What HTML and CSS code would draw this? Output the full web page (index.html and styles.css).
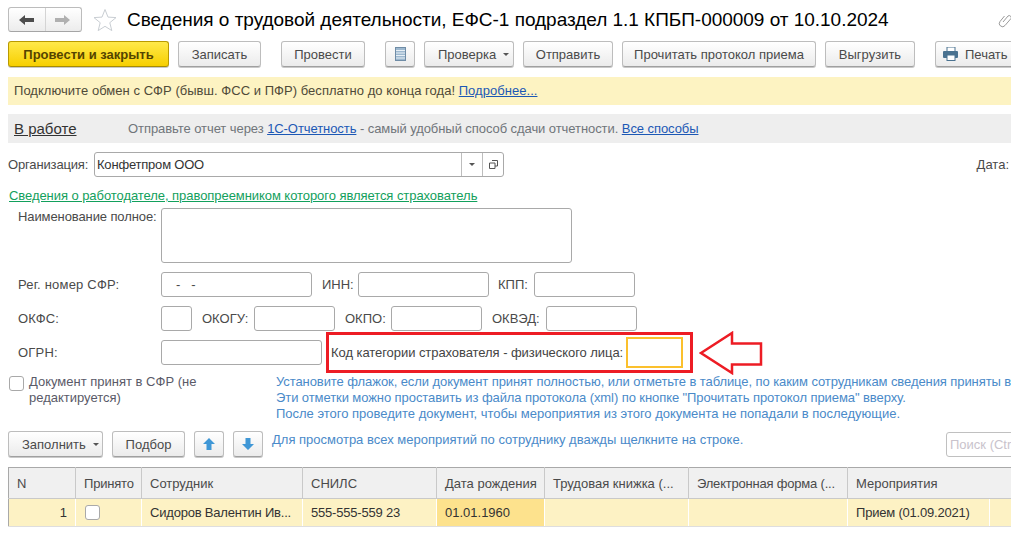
FILE: index.html
```html
<!DOCTYPE html>
<html lang="ru">
<head>
<meta charset="utf-8">
<title>Сведения о трудовой деятельности</title>
<link rel="stylesheet" href="styles.css">
</head>
<body>
<div class="page">
  <header class="head">
    <div class="nav">
      <span class="nav-btn"><svg width="16" height="12" viewBox="0 0 16 12"><path d="M0 6l6-5v3h9v4H6v3z" fill="#4d4d4d"/></svg></span>
      <span class="nav-btn"><svg width="16" height="12" viewBox="0 0 16 12"><path d="M15 6L9 1v3H0v4h9v3z" fill="#b0b0b0"/></svg></span>
    </div>
    <svg class="star" width="24" height="24" viewBox="0 0 24 24"><path d="M12 1.5l3 7.6 8 .5-6.200 5.100 2 7.900L12 18.300 5.200 22.600l2-7.900L1 9.600l8-.5z" fill="#fff" stroke="#c9ced3"/></svg>
    <h1 class="title">Сведения о трудовой деятельности, ЕФС-1 подраздел 1.1 КПБП-000009 от 10.10.2024</h1>
    <svg class="clip" width="16" height="16" viewBox="0 0 16 16"><path d="M6 10l5-6a2 2 0 0 1 3 2.500L8 13.500a3.200 3.200 0 0 1-5-4L7.500 4" fill="none" stroke="#9a9a9a"/></svg>
  </header>

  <nav class="toolbar">
    <button class="btn primary w161">Провести и закрыть</button>
    <button class="btn w83">Записать</button>
    <button class="btn w84 gap-l">Провести</button>
    <button class="btn w30 gap-l" aria-label="Структура"><svg width="11" height="14" viewBox="0 0 11 14"><rect x=".5" y=".5" width="10" height="13" fill="#9db8cf" stroke="#6f8ca6"/><path d="M1 3.500h9M1 6h9M1 8.500h9M1 11h9" stroke="#e8f0f6"/></svg></button>
    <button class="btn w90 has-caret">Проверка<i class="caret"></i></button>
    <button class="btn w90">Отправить</button>
    <button class="btn w194">Прочитать протокол приема</button>
    <button class="btn w90">Выгрузить</button>
    <button class="btn w90 gap-l print"><svg width="16" height="14" viewBox="0 0 16 14"><rect x="4" y="0" width="8" height="5" fill="#fff" stroke="#4a7290"/><rect x="0" y="4" width="15" height="7" rx="1" fill="#4a7290"/><rect x="4" y="8" width="8" height="5.500" fill="#fff" stroke="#4a7290"/></svg>Печать</button>
  </nav>

  <div class="banner">Подключите обмен с СФР (бывш. ФСС и ПФР) бесплатно до конца года! <a href="#">Подробнее...</a></div>

  <div class="status">
    <a class="state" href="#">В работе</a>
    <span class="status-text">Отправьте отчет через <a href="#">1С-Отчетность</a> - самый удобный способ сдачи отчетности. <a href="#">Все способы</a></span>
  </div>

  <div class="org">
    <label class="org-label">Организация:</label>
    <div class="org-field">
      <span class="org-value">Конфетпром ООО</span>
      <span class="org-btn"><i class="caret"></i></span>
      <span class="org-btn"><svg width="9" height="9" viewBox="0 0 9 9"><path d="M3 .5h5.500V6H6M.5 3H6v5.500H.5z" fill="none" stroke="#555"/></svg></span>
    </div>
    <label class="date-label">Дата:</label>
  </div>

  <a class="green-link" href="#">Сведения о работодателе, правопреемником которого является страхователь</a>

  <div class="form">
    <div class="row row-name">
      <label class="lbl-main">Наименование полное:</label>
      <div class="input area"></div>
    </div>
    <div class="row">
      <label class="lbl-main wide">Рег. номер СФР:</label>
      <div class="input w151 mask">-&nbsp;&nbsp;&nbsp;-</div>
      <label class="lbl l36">ИНН:</label>
      <div class="input w131"></div>
      <label class="lbl l36 ml9">КПП:</label>
      <div class="input w101"></div>
    </div>
    <div class="row">
      <label class="lbl-main wide">ОКФС:</label>
      <div class="input w31"></div>
      <label class="lbl l52">ОКОГУ:</label>
      <div class="input w81"></div>
      <label class="lbl l46">ОКПО:</label>
      <div class="input w91"></div>
      <label class="lbl l54">ОКВЭД:</label>
      <div class="input w91"></div>
    </div>
    <div class="row">
      <label class="lbl-main wide">ОГРН:</label>
      <div class="input w161"></div>
      <div class="frame">
        <label class="frame-label">Код категории страхователя - физического лица:</label>
        <div class="input-focus"></div>
      </div>
      <svg class="arrow" width="64" height="44" viewBox="0 0 64 44"><path d="M2 22L33 2v10.500h29v21H33V42z" fill="#fff" stroke="#ed1c24" stroke-width="2.500"/></svg>
    </div>
  </div>

  <div class="accept">
    <div class="check-wrap">
      <span class="check"></span>
      <span class="check-text">Документ принят в СФР (не редактируется)</span>
    </div>
    <div class="help">
      <p>Установите флажок, если документ принят полностью, или отметьте в таблице, по каким сотрудникам сведения приняты в</p>
      <p>Эти отметки можно проставить из файла протокола (xml) по кнопке "Прочитать протокол приема" вверху.</p>
      <p class="help-last">После этого проведите документ, чтобы мероприятия из этого документа не попадали в последующие.</p>
    </div>
  </div>

  <div class="table-bar">
    <button class="btn w95 has-caret">Заполнить<i class="caret"></i></button>
    <button class="btn w73">Подбор</button>
    <button class="btn w30" aria-label="Вверх"><svg width="12" height="12" viewBox="0 0 12 12"><path d="M6 0l6 6H8.500v6h-5V6H0z" fill="#3f97d6"/></svg></button>
    <button class="btn w30" aria-label="Вниз"><svg width="12" height="12" viewBox="0 0 12 12"><path d="M6 12l6-6H8.500V0h-5v6H0z" fill="#3f97d6"/></svg></button>
    <span class="hint">Для просмотра всех мероприятий по сотруднику дважды щелкните на строке.</span>
    <div class="search">Поиск (Ctrl+F)</div>
  </div>

  <table class="grid">
    <colgroup>
      <col class="c1"><col class="c2"><col class="c3"><col class="c4"><col class="c5"><col class="c6"><col class="c7"><col class="c8"><col class="c9">
    </colgroup>
    <thead>
      <tr>
        <th>N</th><th class="tight">Принято</th><th>Сотрудник</th><th>СНИЛС</th><th>Дата рождения</th><th>Трудовая книжка (...</th><th class="tight">Электронная форма (...</th><th colspan="2">Мероприятия</th>
      </tr>
    </thead>
    <tbody>
      <tr>
        <td class="num">1</td><td><span class="check cell-check"></span></td><td class="tight">Сидоров Валентин Ив...</td><td class="tight">555-555-559 23</td><td class="active">01.01.1960</td><td></td><td></td><td class="tight">Прием (01.09.2021)</td><td></td>
      </tr>
    </tbody>
  </table>
</div>
</body>
</html>
```

FILE: styles.css
```css
* { box-sizing: border-box; }
html, body { margin: 0; padding: 0; overflow: hidden; background: #fff; }
body { width: 1011px; height: 537px; }
.page {
  width: 1011px; height: 537px; overflow: hidden; padding: 7px 0 0 8px;
  font: 13px/15px "Liberation Sans", Arial, sans-serif; color: #4a4a4a;
}
a { color: #1c58b5; }

.head { display: flex; align-items: center; height: 25px; width: 1003px; }
.nav {
  display: flex; width: 74px; height: 25px; flex: none;
  border: 1px solid #bcbcbc; border-bottom-color: #a5a5a5; border-radius: 3px;
  background: linear-gradient(#fff, #ececec);
}
.nav-btn { flex: 1; display: flex; align-items: center; justify-content: center; }
.nav-btn + .nav-btn { border-left: 1px solid #d4d4d4; }
.star { margin-left: 11px; flex: none; }
.title { margin: 0 0 0 10px; font-size: 19px; line-height: 25px; font-weight: 400; color: #000; white-space: nowrap; flex: none; letter-spacing: -.025px; }
.clip { margin-left: auto; margin-right: -2px; flex: none; }

.toolbar { display: flex; gap: 9px; margin-top: 9px; width: 1090px; }
.btn {
  display: inline-flex; align-items: center; justify-content: center; flex: none;
  height: 26px; padding: 0; font: 13px/15px "Liberation Sans", Arial, sans-serif; color: #4a4a4a;
  border: 1px solid #bdbdbd; border-bottom-color: #a0a0a0; border-radius: 3px;
  background: linear-gradient(#fff, #ebebeb);
  box-shadow: 0 1px 0 #c9c9c9;
}
.primary {
  font-weight: 700; color: #544400; border-color: #b99a00 #b99a00 #a88c00;
  background: linear-gradient(#ffe94a, #f7cf00);
}
.has-caret { justify-content: flex-start; padding-left: 13px; }
.gap-l { margin-left: 11px; }
.w30 { width: 30px; } .w73 { width: 73px; } .w83 { width: 83px; } .w84 { width: 84px; }
.w90 { width: 90px; } .w95 { width: 95px; } .w161 { width: 161px; } .w194 { width: 194px; }
.print { justify-content: flex-start; padding-left: 7px; }
.print svg { margin-right: 6px; }
.caret { display: inline-block; width: 0; height: 0; margin-left: 7px; border: 3px solid transparent; border-top: 3px solid #555; border-bottom: 0; }

.banner { margin-top: 10px; height: 28px; padding-left: 6px; background: #fdf3c2; line-height: 28px; color: #4f4a38; letter-spacing: .04px; }
.status {
  display: flex; margin-top: 9px; height: 29px; padding-left: 6px; align-items: center;
  background: #eeeeee; color: #70757a;
}
.status-text { letter-spacing: -.07px; }
.state { width: 114px; font-size: 15px; color: #333; flex: none; }

.org { display: flex; align-items: center; margin-top: 9px; height: 25px; }
.org-label { width: 86px; flex: none; letter-spacing: -.15px; }
.org-field {
  display: flex; width: 410px; height: 25px; flex: none; border: 1px solid #a9a9a9; border-radius: 3px; background: #fff;
}
.org-value { flex: 1; padding-left: 2px; line-height: 23px; color: #333; letter-spacing: -.2px; }
.org-btn { width: 21px; display: flex; align-items: center; justify-content: center; border-left: 1px solid #bdbdbd; }
.org-btn .caret { margin-left: 0; }
.date-label { margin-left: auto; margin-right: 2px; }

.green-link { display: block; margin-top: 11px; padding-left: 1px; color: #12a05c; line-height: 15px; height: 16px; white-space: nowrap; width: 470px; letter-spacing: -.06px; }
.form { margin-top: 4px; padding-left: 10px; }
.row { display: flex; align-items: center; height: 25px; margin-top: 9px; }
.row-name { height: 55px; align-items: flex-start; margin-top: 0; }
.lbl-main { width: 143px; flex: none; letter-spacing: -.1px; }
.lbl-main.wide { letter-spacing: .2px; }
.row-name .lbl-main { padding-top: 1px; }
.input { height: 25px; flex: none; border: 1px solid #a9a9a9; border-radius: 3px; background: #fff; }
.area { width: 411px; height: 55px; }
.w151 { width: 151px; } .w131 { width: 131px; } .w101 { width: 101px; } .w31 { width: 31px; }
.w81 { width: 81px; } .w91 { width: 91px; }
.mask { padding-left: 14px; line-height: 23px; }
.lbl { flex: none; margin-left: 10px; }
.ml9 { margin-left: 9px; }
.l36 { width: 36px; } .l52 { width: 52px; } .l46 { width: 46px; } .l54 { width: 54px; }
.frame {
  display: flex; align-items: center; flex: none; width: 367px; height: 41px; margin: -8px 0 -8px 4px;
  padding-left: 2px; border: 3px solid #ed1c24; background: #fff;
}
.frame-label { white-space: nowrap; color: #444; letter-spacing: -.06px; }
.input-focus { width: 57px; height: 31px; margin-left: auto; margin-right: 7px; border: 2px solid #fbc02d; flex: none; }
.arrow { margin: -10px 0 -10px 6px; flex: none; }

.accept { display: flex; margin-top: 8px; height: 48px; }
.check-wrap { display: flex; width: 268px; flex: none; }
.check { display: block; width: 15px; height: 15px; margin: 3px 0 0 1px; border: 1px solid #a9a9a9; border-radius: 3px; background: #fff; flex: none; }
.check-text { width: 190px; margin-left: 5px; line-height: 16px; padding-top: 1px; color: #5a5a68; }
.help { white-space: nowrap; color: #4a8ac9; line-height: 16px; padding-top: 1px; letter-spacing: -.08px; }
.help p { margin: 0; }
.help .help-last { letter-spacing: -.01px; }

.table-bar { display: flex; align-items: flex-start; gap: 9px; margin-top: 10px; height: 26px; width: 1100px; position: relative; }
.hint { padding-top: 1px; color: #4a8ac9; white-space: nowrap; }
.search {
  position: absolute; left: 938px; top: 1px; width: 120px; height: 25px; padding-left: 3px; line-height: 23px;
  border: 1px solid #c0c0c0; border-radius: 3px; color: #c9c3cc;
}

.grid { margin-top: 10px; width: 1003px; border-collapse: collapse; table-layout: fixed; border-top: 1px solid #a9a9a9; }
.c1 { width: 67px; } .c2 { width: 66px; } .c3 { width: 161px; } .c4 { width: 134px; }
.c5 { width: 108px; } .c6 { width: 144px; } .c7 { width: 159px; } .c8 { width: 142px; } .c9 { width: 22px; }
.grid th {
  height: 31px; padding: 0 8px; text-align: left; font-weight: 400; background: #f0f0f0; color: #4a4a4a;
  border: 1px solid #c9c9c9; border-top: 0; white-space: nowrap; overflow: hidden;
}
.grid td {
  height: 28px; padding: 0 8px; background: #fdf2c4; color: #333; border: 1px solid #fff; border-bottom: 1px solid #dedede;
  white-space: nowrap; overflow: hidden;
}
.grid th:first-child, .grid td:first-child { border-left: 1px solid #a9a9a9; }
.grid td.num { text-align: right; }
.grid td.active { background: #fde28d; }
.grid .tight { letter-spacing: -.2px; }
.cell-check { margin: 0 0 0 1px; }
```
